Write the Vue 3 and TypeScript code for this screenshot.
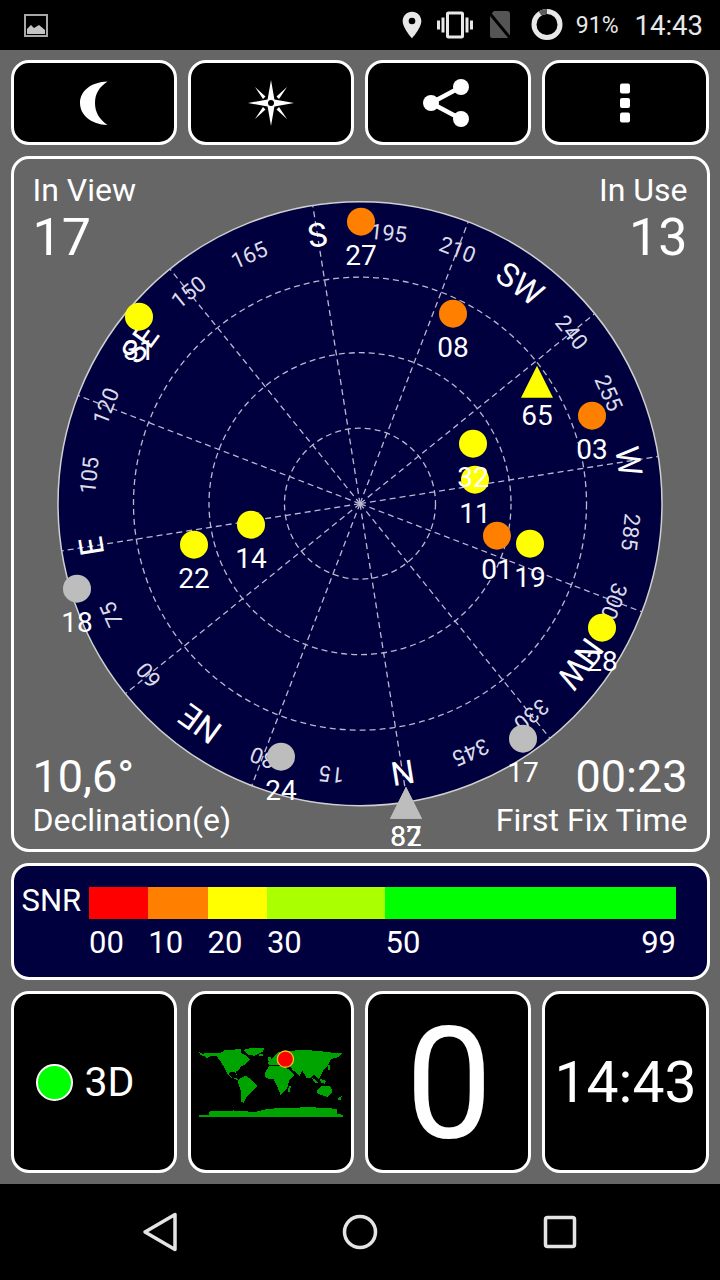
<script setup lang="ts">
interface Sat {
  id: string;
  x: number;
  y: number;
  color: string;
  shape?: 'tri';
}

const CX = 360;
const CY = 504;
const R = 302;
// compass is turned so north sits near the bottom
const ROTATION = 171;

const rings = [75.5, 151, 226.5];

const polar = (az: number, r: number) => {
  const a = ((az + ROTATION) * Math.PI) / 180;
  return { x: CX + r * Math.sin(a), y: CY - r * Math.cos(a) };
};

const spokes = Array.from({ length: 12 }, (_, i) => polar(i * 30, R));

const names: Record<number, string> = { 0: 'N', 45: 'NE', 90: 'E', 135: 'SE', 180: 'S', 225: 'SW', 270: 'W', 315: 'NW' };

const ticks = Array.from({ length: 24 }, (_, i) => {
  const az = i * 15;
  const pos = polar(az, 272);
  return {
    az,
    text: names[az] ?? String(az),
    major: az in names,
    x: pos.x,
    y: pos.y,
    transform: `rotate(${az + ROTATION} ${pos.x} ${pos.y})`,
  };
});

const YELLOW = '#ffff00';
const ORANGE = '#ff8000';
const GRAY = '#bdbdbd';

const sats: Sat[] = [
  { id: '31', x: 139, y: 317, color: YELLOW },
  { id: '27', x: 361, y: 222, color: ORANGE },
  { id: '08', x: 453, y: 314, color: ORANGE },
  { id: '03', x: 592, y: 416, color: ORANGE },
  { id: '11', x: 475, y: 480, color: YELLOW },
  { id: '32', x: 473, y: 444, color: YELLOW },
  { id: '01', x: 497, y: 536, color: ORANGE },
  { id: '19', x: 530, y: 544, color: YELLOW },
  { id: '28', x: 602, y: 628, color: YELLOW },
  { id: '17', x: 523, y: 739, color: GRAY },
  { id: '24', x: 281, y: 757, color: GRAY },
  { id: '18', x: 77, y: 589, color: GRAY },
  { id: '22', x: 194, y: 545, color: YELLOW },
  { id: '14', x: 251, y: 525, color: YELLOW },
  { id: '65', x: 537, y: 382, color: YELLOW, shape: 'tri' },
  { id: '87', x: 406, y: 803, color: GRAY, shape: 'tri' },
  { id: '82', x: 406, y: 803, color: GRAY, shape: 'tri' },
];

const triPoints = (s: Sat) => `${s.x},${s.y - 16} ${s.x + 16},${s.y + 16} ${s.x - 16},${s.y + 16}`;

const snrSegments = ['#ff0000', '#ff8000', '#ffff00', '#aaff00', '#00ff00'];

const land = [
  // north america
  '25,69 36,74 48,70 92,70 100,63 150,60 152,72 165,78 178,92 168,100 160,108 150,112 145,122 135,128 138,138 132,130 118,130 112,135 122,145 138,148 145,150 140,153 122,146 108,132 98,112 86,92 78,82 60,80 46,88 42,82 28,78',
  // greenland
  '158,62 186,55 222,55 216,68 190,80 172,76',
  // south america
  '144,150 166,140 186,155 201,170 182,190 168,204 158,222 150,218 150,186 142,162',
  // eurasia
  '232,100 240,90 250,84 262,70 330,62 382,65 438,72 458,70 446,84 422,90 412,110 400,124 386,152 372,136 362,146 348,146 336,124 328,140 306,122 300,112 266,108 236,108',
  // africa
  '222,132 236,112 270,110 298,122 312,138 296,156 290,180 270,198 260,172 250,150 226,148',
  // australia
  '378,186 394,172 420,170 428,190 412,204 386,196',
  // antarctica
  '25,258 54,258 56,248 130,245 170,248 192,250 230,240 300,237 360,235 440,240 442,255 458,258 458,264 25,264',
  // iceland, britain, japan, indonesia, madagascar, new zealand
  '206,76 216,76 216,82 206,82',
  '232,84 240,84 240,96 232,96',
  '414,108 420,108 418,124 412,124',
  '362,146 372,150 386,162 376,162',
  '390,150 408,156 404,164 392,160',
  '296,172 302,172 298,188 292,188',
  '444,208 456,200 452,212 444,214',
];
</script>

<template>
  <div class="screen">
    <header class="status">
      <svg class="st-image" width="24" height="24" viewBox="0 0 24 24">
        <rect x="1" y="2" width="22" height="21" fill="none" stroke="#a8a8a8" stroke-width="2" />
        <path d="M3 21v-5l4-4 3 3 5-3 6 5v4z" fill="#c4c4c4" />
      </svg>
      <div class="st-right">
        <svg width="32" height="32" viewBox="0 0 24 24">
          <path fill="#e8e8e8" fill-rule="evenodd" d="M12 2C8.13 2 5 5.13 5 9c0 5.25 7 13 7 13s7-7.75 7-13c0-3.87-3.13-7-7-7zm0 9.5a2.5 2.5 0 010-5 2.5 2.5 0 010 5z" />
        </svg>
        <svg class="st-vib" width="36" height="36" viewBox="0 0 24 24">
          <path fill="#e8e8e8" d="M0 15h2V9H0v6zm3 2h2V7H3v10zm19-8v6h2V9h-2zm-3 8h2V7h-2v10zM16.5 3h-9C6.67 3 6 3.67 6 4.5v15c0 .83.67 1.5 1.5 1.5h9c.83 0 1.5-.67 1.5-1.5v-15c0-.83-.67-1.5-1.5-1.5zM16 19H8V5h8v14z" />
        </svg>
        <svg class="st-sim" width="28" height="30" viewBox="0 0 28 30">
          <path fill="#555" d="M9 1h13a3 3 0 013 3v22a2 2 0 01-2 2H7a2 2 0 01-2-2V5z" />
          <path d="M2 0l24 29" stroke="#000" stroke-width="3" />
        </svg>
        <svg class="st-ring" width="34" height="34" viewBox="0 0 34 34">
          <circle cx="17" cy="16.500" r="13" fill="none" stroke="#e8e8e8" stroke-width="5" />
          <path d="M17 3.500A13 13 0 0010 5.500" fill="none" stroke="#5c5c5c" stroke-width="5" />
        </svg>
        <span class="st-batt">91%</span>
        <span class="st-time">14:43</span>
      </div>
    </header>

    <main class="content">
      <div class="row-4">
        <button class="tile">
          <svg width="28" height="44" viewBox="0 0 28 44">
            <path fill="#fff" d="M27.5 0.5C11 1 0 10 0 22s11 21.500 27.500 22C19 38 15 31 15 22S19 6 27.500 0.500z" />
          </svg>
        </button>
        <button class="tile">
          <svg width="48" height="48" viewBox="0 0 48 48">
            <path fill="#fff" fill-rule="evenodd" d="M24 1l3.400 19.600L47 24l-19.600 3.400L24 47l-3.400-19.600L1 24l19.600-3.400zM24 21a3 3 0 100 6 3 3 0 000-6z" />
            <path fill="#fff" d="M40 8L29.500 17.500 32 20zM8 8l10.500 9.500L16 20zM40 40L29.500 30.500 32 28zM8 40l10.500-9.500L16 28z" />
          </svg>
        </button>
        <button class="tile">
          <svg class="share" width="48" height="50" viewBox="0 0 48 50">
            <path d="M39 9L9 25l30 16" fill="none" stroke="#fff" stroke-width="4.500" />
            <circle cx="39" cy="9" r="8" fill="#fff" />
            <circle cx="9" cy="25" r="8" fill="#fff" />
            <circle cx="39" cy="41" r="8" fill="#fff" />
          </svg>
        </button>
        <button class="tile">
          <svg width="12" height="40" viewBox="0 0 12 40">
            <rect x="1" y="0.500" width="10" height="10" rx="2" fill="#fff" />
            <rect x="1" y="15" width="10" height="10" rx="2" fill="#fff" />
            <rect x="1" y="29.500" width="10" height="10" rx="2" fill="#fff" />
          </svg>
        </button>
      </div>

      <section class="radar">
        <svg class="sky" width="693" height="689.500" viewBox="14 159.330 693 689.500">
          <circle :cx="CX" :cy="CY" :r="R" fill="#00003f" stroke="#d0d0d0" stroke-width="1.500" />
          <circle v-for="r in rings" :key="r" :cx="CX" :cy="CY" :r="r" fill="none" class="grid-line" />
          <line v-for="(s, i) in spokes" :key="i" :x1="CX" :y1="CY" :x2="s.x" :y2="s.y" class="grid-line" />
          <text
            v-for="t in ticks"
            :key="t.az"
            :x="t.x"
            :y="t.y"
            :transform="t.transform"
            :class="t.major ? 'tick-major' : 'tick-minor'"
            text-anchor="middle"
            dominant-baseline="central"
          >{{ t.text }}</text>
          <template v-for="s in sats" :key="s.id">
            <polygon v-if="s.shape === 'tri'" :points="triPoints(s)" :fill="s.color" />
            <circle v-else :cx="s.x" :cy="s.y" r="14" :fill="s.color" />
          </template>
          <text v-for="s in sats" :key="s.id" :x="s.x" :y="s.y + 43.500" class="sat-label" text-anchor="middle">{{ s.id }}</text>
        </svg>
        <div class="corners">
          <div class="corner-col">
            <div class="label">In View</div>
            <div class="value">17</div>
          </div>
          <div class="corner-col end">
            <div class="label">In Use</div>
            <div class="value">13</div>
          </div>
          <div class="corner-col">
            <div class="value small">10,6°</div>
            <div class="label">Declination(e)</div>
          </div>
          <div class="corner-col end">
            <div class="value small">00:23</div>
            <div class="label">First Fix Time</div>
          </div>
        </div>
      </section>

      <section class="snr">
        <div class="snr-name">SNR</div>
        <div class="snr-bar">
          <div v-for="c in snrSegments" :key="c" :style="{ background: c }"></div>
        </div>
        <div class="snr-scale">
          <span>00</span>
          <span>10</span>
          <span>20</span>
          <span>30</span>
          <span class="snr-last"><span>50</span><span>99</span></span>
        </div>
      </section>

      <div class="row-4">
        <div class="tile fix">
          <span class="fix-dot"></span>
          <span class="fix-text">3D</span>
        </div>
        <div class="tile">
          <svg class="map" width="160" height="100" viewBox="0 0 480 300" shape-rendering="crispEdges">
            <polygon v-for="(p, i) in land" :key="i" :points="p" fill="#00a400" />
            <circle cx="285" cy="90" r="24.500" fill="#ff0000" stroke="#f0c020" stroke-width="4" shape-rendering="auto" />
          </svg>
        </div>
        <div class="tile big-zero">0</div>
        <div class="tile clock">14:43</div>
      </div>
    </main>

    <nav class="nav">
      <svg width="40" height="44" viewBox="0 0 40 44">
        <path d="M35 4.500v35L5 22z" fill="none" stroke="#e4e4e4" stroke-width="3.500" stroke-linejoin="round" />
      </svg>
      <svg width="40" height="40" viewBox="0 0 40 40">
        <circle cx="20" cy="20" r="15.500" fill="none" stroke="#e4e4e4" stroke-width="3.500" />
      </svg>
      <svg width="40" height="40" viewBox="0 0 40 40">
        <rect x="5.500" y="5.500" width="29" height="29" rx="2" fill="none" stroke="#e4e4e4" stroke-width="3.500" />
      </svg>
    </nav>
  </div>
</template>

<style>
html,
body {
  margin: 0;
  background: #000;
}
</style>

<style scoped>
.screen {
  width: 720px;
  height: 1280px;
  display: flex;
  flex-direction: column;
  background: #666;
  color: #fff;
  font-family: Roboto, "Liberation Sans", sans-serif;
  overflow: hidden;
}
.status {
  flex: 0 0 50px;
  background: #000;
  display: flex;
  align-items: center;
  justify-content: space-between;
  padding: 0 17px 0 24px;
  box-sizing: border-box;
  color: #e8e8e8;
}
.st-image {
  display: block;
}
.st-right {
  display: flex;
  align-items: center;
}
.st-right svg {
  display: block;
}
.st-vib {
  margin-left: 9px;
  margin-right: 1px;
}
.st-sim {
  margin-left: 11px;
}
.st-ring {
  margin-left: 17px;
}
.st-batt {
  margin-left: 12px;
  font-size: 23px;
}
.st-time {
  margin-left: 16px;
  font-size: 27.500px;
}
.content {
  flex: 1;
  min-height: 0;
  box-sizing: border-box;
  padding: 10px 10.500px 0;
  display: grid;
  grid-template-rows: 85px 695.500px 116.500px 182px;
  row-gap: 11.330px;
  align-content: start;
}
.row-4 {
  display: grid;
  grid-template-columns: repeat(4, 1fr);
  column-gap: 11.330px;
  padding-right: 1px;
}
.tile {
  box-sizing: border-box;
  background: #000;
  border: 3px solid #fff;
  border-radius: 18px;
  display: flex;
  align-items: center;
  justify-content: center;
  padding: 0;
  color: #fff;
  font-family: inherit;
  min-width: 0;
}
.share {
  margin-right: 4px;
}
.radar {
  box-sizing: border-box;
  border: 3px solid #fff;
  border-radius: 18px;
  display: grid;
}
.sky {
  grid-area: 1 / 1;
  display: block;
  overflow: visible;
}
.grid-line {
  stroke: #b8b8d0;
  stroke-width: 1.300;
  stroke-dasharray: 6 4;
  fill: none;
}
.tick-major {
  fill: #fff;
  font-size: 33px;
}
.tick-minor {
  fill: #dcdce8;
  font-size: 22px;
}
.sat-label {
  fill: #fff;
  font-size: 28px;
}
.corners {
  grid-area: 1 / 1;
  display: grid;
  grid-template-columns: 1fr 1fr;
  align-content: space-between;
  padding: 12.500px 19px 10.400px;
  pointer-events: none;
}
.corner-col {
  display: flex;
  flex-direction: column;
}
.corner-col.end {
  align-items: flex-end;
}
.label {
  font-size: 32px;
  line-height: 36px;
}
.value {
  font-size: 52px;
  line-height: 59px;
}
.value.small {
  font-size: 45px;
  line-height: 50px;
}
.snr {
  box-sizing: border-box;
  background: #00003f;
  border: 3px solid #fff;
  border-radius: 18px;
  padding: 21px 30.500px 0 8px;
  display: grid;
  grid-template-columns: 67.500px 1fr;
  grid-template-rows: 32px auto;
  row-gap: 6px;
}
.snr-name {
  font-size: 31px;
  line-height: 27px;
}
.snr-bar,
.snr-scale {
  display: grid;
  grid-template-columns: 1fr 1fr 1fr 2fr 4.900fr;
}
.snr-scale {
  grid-column: 2;
  font-size: 31px;
  line-height: 36px;
}
.snr-last {
  display: flex;
  justify-content: space-between;
}
.fix {
  gap: 12px;
  padding: 1px 17px 0 0;
}
.fix-dot {
  width: 37px;
  height: 37px;
  box-sizing: border-box;
  border: 2px solid #fff;
  border-radius: 50%;
  background: #00ff00;
}
.fix-text {
  font-size: 41px;
}
.map {
  display: block;
  margin: 0 1px 5px 0;
}
.big-zero {
  font-size: 155px;
  line-height: 1;
  padding: 6px 0 0 2px;
}
.clock {
  font-size: 57px;
  padding-top: 1px;
}
.nav {
  flex: 0 0 96px;
  background: #000;
  display: grid;
  grid-template-columns: repeat(3, 200px);
  justify-content: center;
  justify-items: center;
  align-items: center;
}
</style>
